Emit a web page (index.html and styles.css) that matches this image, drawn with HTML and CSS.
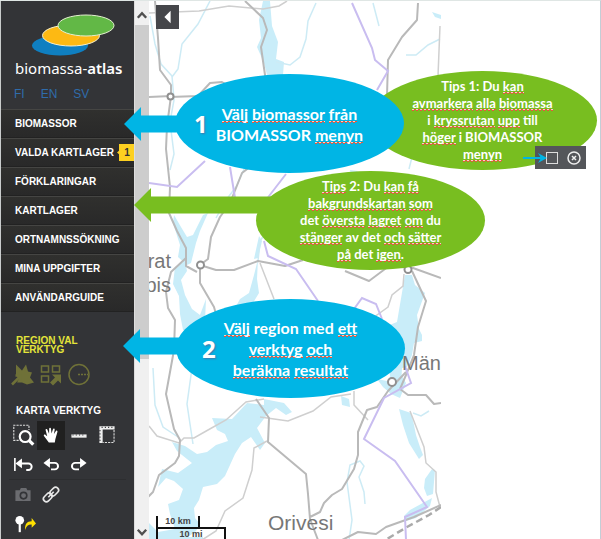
FILE: index.html
```html
<!DOCTYPE html>
<html lang="sv">
<head>
<meta charset="utf-8">
<meta name="viewport" content="width=device-width, initial-scale=1">
<title>biomassa-atlas</title>
<link rel="stylesheet" href="styles.css">
</head>
<body>
<div class="app">
  <aside class="sidebar">
    <header class="brand">
      <svg class="brand-logo" viewBox="0 0 84 44" aria-hidden="true">
        <ellipse cx="29" cy="31.500" rx="28" ry="10" fill="#0f7fc1"/>
        <ellipse cx="40" cy="21.500" rx="28.500" ry="10.500" fill="#fdb913" stroke="#f4f0d0"/>
        <ellipse cx="55" cy="11.500" rx="28" ry="10.500" fill="#62b846" stroke="#e4f0d0"/>
      </svg>
      <div class="brand-name">biomassa-<b>atlas</b></div>
    </header>
    <nav class="languages" aria-label="Språk">
      <a href="#fi">FI</a><a href="#en">EN</a><a href="#sv">SV</a>
    </nav>
    <nav class="menu" aria-label="Meny">
      <a href="#biomassor">BIOMASSOR</a>
      <a href="#valda">VALDA KARTLAGER <span class="badge">1</span></a>
      <a href="#forklaringar">FÖRKLARINGAR</a>
      <a href="#kartlager">KARTLAGER</a>
      <a href="#ortnamn">ORTNAMNSSÖKNING</a>
      <a href="#uppgifter">MINA UPPGIFTER</a>
      <a href="#guide">ANVÄNDARGUIDE</a>
    </nav>
    <section class="tools region-tools">
      <h2>REGION VAL VERKTYG</h2>
      <div class="tool-grid">
        <button type="button" aria-label="Välj område"><svg viewBox="0 0 24 24"><path d="M5 2l6 6 4-6 2 7 4 1-2 5 4 5-7 2-5-2-5 0 2-4-3-3z" fill="#6f7138"/><path d="M1 22l8-8M4.500 13h5v5" fill="none" stroke="#6f7138" stroke-width="2.500"/></svg></button>
        <button type="button" aria-label="Välj rutor"><svg viewBox="0 0 24 24"><path d="M2.500 3.500h7v6h-7zM13.500 3.500h7v6h-7zM2.500 13.500h7v6h-7z" fill="none" stroke="#6f7138" stroke-width="1.500"/><path d="M13 12h9v9l-3-3-5 5-3-3 5-5z" fill="#6f7138"/></svg></button>
        <button type="button" aria-label="Välj cirkel"><svg viewBox="0 0 24 24"><circle cx="12" cy="12" r="10" fill="none" stroke="#6f7138" stroke-width="1.500"/><path d="M11 12h10" stroke="#6f7138" stroke-width="1.500" stroke-dasharray="2 1"/></svg></button>
      </div>
    </section>
    <section class="tools map-tools">
      <h2>KARTA VERKTYG</h2>
      <div class="tool-grid">
        <button type="button" aria-label="Zooma till ruta"><svg viewBox="0 0 24 24"><path d="M11 16.500H3.500V2.500h14V7" fill="none" stroke="#ddd" stroke-dasharray="2 1"/><circle cx="14" cy="13" r="5" fill="none" stroke="#fff" stroke-width="2"/><path d="M17.500 16.500l4 4" stroke="#fff" stroke-width="3"/></svg></button>
        <button type="button" class="active" aria-label="Panorera"><svg viewBox="0 0 24 24"><path d="M10 18.500L5.500 12.500c-.7-1.200.7-1.800 1.500-1l1.500 1.200L7 7c-.2-1.200 1.300-1.500 1.700-.4l1.500 3.700.1-4.500c0-1.200 1.600-1.200 1.700 0l.5 4.400 1.300-4c.4-1.100 1.700-.7 1.600.5l-.7 4 1.700-2.700c.6-1 1.800-.4 1.500.8L16 15.500l-.5 3z" fill="#fff"/></svg></button>
        <button type="button" aria-label="Mät avstånd"><svg viewBox="0 0 24 24"><path d="M5 11h14v3H5z" fill="#eee"/><path d="M6 11.500h12" stroke="#333437" stroke-dasharray="1 2"/></svg></button>
        <button type="button" aria-label="Mät area"><svg viewBox="0 0 24 24"><path d="M5 5h14M6.500 4v15" stroke="#eee" stroke-width="3"/><path d="M7 4.500h12M5.500 7v12" stroke="#333437" stroke-dasharray="1 2"/><path d="M18.500 7v11.500H8" fill="none" stroke="#ddd" stroke-dasharray="2 1"/></svg></button>
        <button type="button" aria-label="Startvy"><svg viewBox="0 0 24 24"><path d="M4.500 6v12" stroke="#fff" stroke-width="1.500"/><path d="M8 11h9a3 3 0 010 6h-2" fill="none" stroke="#fff" stroke-width="1.800"/><path d="M5 11l6-4.500v9z" fill="#fff"/></svg></button>
        <button type="button" aria-label="Föregående"><svg viewBox="0 0 24 24"><path d="M8 10.500h7.500a3 3 0 010 6H12" fill="none" stroke="#fff" stroke-width="1.800"/><path d="M5 10.500L11 6v9z" fill="#fff"/></svg></button>
        <button type="button" aria-label="Nästa"><svg viewBox="0 0 24 24"><path d="M15 10.500H8.500a3 3 0 000 6H12" fill="none" stroke="#fff" stroke-width="1.800"/><path d="M19 10.500L13 6v9z" fill="#fff"/></svg></button>
      </div>
      <div class="tool-grid ruled">
        <button type="button" aria-label="Skärmbild"><svg viewBox="0 0 24 24"><path d="M5 8h4l1-2h5l1 2h3v10H5z" fill="#6b6c70"/><circle cx="12.500" cy="13" r="3" fill="none" stroke="#333437" stroke-width="1.500"/></svg></button>
        <button type="button" aria-label="Länk"><svg viewBox="0 0 24 24" fill="none" stroke="#e8e8e8" stroke-width="1.500"><rect x="10.500" y="6.500" width="9" height="5.500" rx="2.750" transform="rotate(-45 15 9.250)"/><rect x="4.500" y="12" width="9" height="5.500" rx="2.750" transform="rotate(-45 9 14.750)"/><path d="M9.500 14.500l5-5"/></svg></button>
      </div>
      <div class="tool-grid">
        <button type="button" aria-label="Dela plats"><svg viewBox="0 0 24 24"><circle cx="9" cy="9" r="4" fill="#fff"/><path d="M9 10v10" stroke="#fff" stroke-width="2"/><path d="M14 18c-.5-5 1.500-8 6-8V7l4 5-4 4v-3c-3-.2-5 1.500-6 5z" fill="#ffe000"/></svg></button>
      </div>
    </section>
  </aside>

  <div class="scrollbar" aria-hidden="true">
    <svg viewBox="0 0 15 26"><path d="M3 18l4.500-5 4.500 5" fill="none" stroke="#505050" stroke-width="2.500"/></svg>
    <div class="thumb"></div>
    <svg viewBox="0 0 15 16"><path d="M3 5l4.500 5L12 5" fill="none" stroke="#505050" stroke-width="2.500"/></svg>
  </div>

  <main class="map">
    <svg class="map-canvas" viewBox="149 0 292 539" preserveAspectRatio="xMinYMin slice" role="img" aria-label="Karta">
      <g fill="#c9edf9">
        <path d="M263 0h7l2 25 6 16-2 17 8 3-1 13h-16l-3-12-7-16 4-9-2-18z"/>
        <path d="M174 214l7 12 6 10 6-2 10-20 5-2-8 18-4 12-5 20-4 2-9-8 2-12-7-22z"/>
        <path d="M175 266l10-6 2 10-6 9 4 15 7 14 8 6 6-16-1 22-6 14-16-5-3-16-1-18-6-12z"/>
        <path d="M258 258l-1 20 2 14-8 13-7 1-9 10-1-7 6-11 9-6 5-18z"/>
        <path d="M262 240l-4 17-4 1 5-23z"/>
        <path d="M405 274h7l3 10 10 8-8 22 2 14 3 6 0 6-8 2-2 12-5 12-5 1-1 16-9 6-3-22-5-20-1-10 4-12 10-4z"/>
        <path d="M377 378l10 2 12-10 7 12-6 15-9-4-8-7z"/>
        <path d="M341 395l8 3 1 8-8-2z"/>
        <path d="M399 408l12 4 3 12 2 10 4 12 3 8-4 4-10-16-6-18z"/>
        <path d="M264 398l20 4 8 9-6 3-10-7-10 8-9 12 8 15-5 7-9-13-9 6-7 11-10 22-8 8-14 3-4 13-5 8 1 10 5 6-4 7-8 6h15v4h-54v-18l9 9 17-3-5-15-2-10 11-4 4-11-9-8-8-3-8 9 4-18 16 4 14-10-15-12-5-9 13 4 12 8 10-2 9-7 12-4-3-7-8-4-5-12 20 1 15-16 17 2z"/>
        <path d="M432 468l-7 10-1 9 3 8 6-2 1-12 1-12z"/>
        <path d="M432 497l-22 12-6 6 2 5 10-3 14-12z"/>
        <path d="M432 11l9 3v4l-6-2z"/>
        <path d="M350 169l8 1-6 9z"/>
      </g>
      <g class="streams">
        <path d="M150 15l5 28 6 20 11 12 2 24-4 22 4 32-4 16"/>
        <path d="M210 0l-12 23-16 20-4 25-6 8"/>
        <path d="M316 2l-8 18-2 18-6 18-10 8-14-3"/>
        <path d="M373 2l6 23M440 38l-12 6-12 10-10 0"/>
        <path d="M245 166l-9 20-10 13-10 18M258 260l2-20 7-10"/>
        <path d="M235 306l-2 18M153 367l2 37 8 22 15 10M192 367l-5 36 6 40"/>
        <path d="M349 539l3-20-5-38 3-17 10-4 4 5-5 11 5 15 1 12"/>
        <path d="M413 412l8 3 8-5M409 168l5-20 2-10"/>
      </g>
      <g class="minor-roads">
        <path d="M149 12l50-2 30-5 34 3 16-3 8-5M440 25l-2 50M440 120l-2 35"/>
        <path d="M260 262l14 36M404 273l-1 12-11 9-4 12-18 13M149 425l8 10 22 7 5-5h10l14-8 18-10 20-18 18-3"/>
        <path d="M260 416l28 4 25-10 18-14 20-3M354 390l0 14 14 15"/>
        <path d="M267 440l-13 7-2 22-9 28-18 13-9 20-14 9M410 410l14 36 2 16 10 9 0 20 4 15"/>
      </g>
      <g class="roads">
        <path d="M155 0l3 37 2 32 11 15v11l-4 30-1 23 4 38-1 26 8 18 9 17v18l11 6M170 96l28-1 12-13 12-1 10 6M149 96l22-1M245 0l18 17 4 12-6 17 5 35M418 2l-1 17-15 17-14 23-1 36M260 158l-18 14-12 30-10 14-9 20-3 22-8 6v18l14 24 6 22"/>
        <path d="M186 257l-15 14-5 20 2 16 7 12-1 30-8 44 8 35 6 11-1 16-4 7-16 12-6 17-5 5M200 264l16 5h18l24-9 27 5 18-6M345 270l24 10 20-15 24 2 28 10M412 270l14 30-8 26-4 28-8 20-6 14"/>
        <path d="M256 398l13 19-1 24 38 32 2 20 2 25 8 21M310 516l10-5 4-9 8-8 10-6 12-20 4-14v-23l9-22 10-3 11-16 18-19"/>
        <path d="M400 388l8 6h18l8 9 7-1M441 504l-27 12-28 10-10 7-18-2-18 9"/>
      </g>
      <path d="M441 506l-12 8-22 12-15 9-10 6" fill="none" stroke="#aaa" stroke-width="2.500" stroke-dasharray="7 4"/>
      <g class="borders">
        <path d="M352 2l20 45 3 12 13 11-11 19M149 182l28 4 28-26M230 166l5 31M286 173l-20 26M264 240l4 15 28 13 22 32M354 308l8-11 14 6 6 15M405 365l6 17-27 15-20 41 31 22 32 46-22 10 1 23"/>
      </g>
      <g fill="#fff" stroke="#909090" stroke-width="2">
        <circle cx="170.500" cy="95.500" r="3"/><circle cx="200.500" cy="264" r="3.500"/><circle cx="408" cy="268.500" r="3.500"/><circle cx="392" cy="381" r="4"/>
      </g>
      <g class="place-names">
        <text x="171" y="267" text-anchor="end">rat</text>
        <text x="171" y="291" text-anchor="end">pis</text>
        <text x="402" y="369">Män</text>
        <text class="town" x="268" y="529">Orivesi</text>
      </g>
    </svg>
    <button type="button" class="collapse" aria-label="Dölj panelen"><svg viewBox="0 0 22 22"><path d="M14 5v12l-6-6z" fill="#fff"/></svg></button>
    <div class="scale"><span class="scale-km">10 km</span><span class="scale-mi">10 mi</span></div>
  </main>

  <div class="callout tip tip-one">
    <p>Tips 1: Du <u>kan</u><br><u>avmarkera</u> <u>alla</u> <u>biomassa</u><br>i <u>kryssrutan</u> <u>upp</u> till<br><u>höger</u> i BIOMASSOR<br><u>menyn</u></p>
  </div>
  <div class="callout step step-one">
    <span class="number">1</span>
    <p><u>Välj</u> <u>biomassor</u> <u>från</u><br>BIOMASSOR <u>menyn</u></p>
  </div>
  <div class="callout tip tip-two">
    <p><u>Tips</u> 2: Du <u>kan</u> <u>få</u><br><u>bakgrundskartan</u> <u>som</u><br>det <u>översta</u> <u>lagret</u> <u>om</u> du<br><u>stänger</u> av det <u>och</u> <u>sätter</u><br><u>på</u> det <u>igen</u>.</p>
  </div>
  <div class="callout step step-two">
    <span class="number">2</span>
    <p><u>Välj</u> region med <u>ett</u><br><u>verktyg</u> <u>och</u><br><u>beräkna</u> <u>resultat</u></p>
  </div>
  <div class="layer-controls">
    <svg class="pointer" viewBox="0 0 25 12" aria-hidden="true"><path d="M0 6h20" stroke="#00b5e5" stroke-width="2"/><path d="M15 1l9 5-9 5 3-5z" fill="#00b5e5"/></svg>
    <input type="checkbox" aria-label="Markera alla">
    <button type="button" aria-label="Stäng"><svg viewBox="0 0 14 14" fill="none" stroke="#eee"><circle cx="7" cy="7" r="6" stroke-width="1.500"/><path d="M5 5l4 4M9 5l-4 4" stroke-width="1.500"/></svg></button>
  </div>
</div>
</body>
</html>
```
FILE: styles.css
```css
* { box-sizing: border-box; }

body {
  margin: 0;
  background: #fff;
  font-family: "Liberation Sans", Arial, sans-serif;
}

.app {
  position: relative;
  display: grid;
  grid-template-columns: 134px 15px 292px 1fr;
  min-height: 100vh;
  border-top: 1px solid #dfe6e4;
  border-right: 1px solid #c3ced6;
}

button {
  padding: 0;
  border: 0;
  background: none;
  cursor: pointer;
}

button svg { display: block; width: 100%; height: 100%; }

/* Sidebar */
.sidebar {
  border-left: 1px solid #c9cccc;
  background: #333437;
  color: #fff;
}

.brand { padding: 13px 8px 0 14px; }

.brand-logo {
  display: block;
  width: 84px;
  height: 44px;
  margin-left: 16px;
}

.brand-name {
  font: 15px/20px "Noto Sans", sans-serif;
  white-space: nowrap;
}

.brand-name b { font-weight: 600; }

.languages {
  display: flex;
  gap: 16px;
  padding: 10px 13px 9px;
  font-size: 12px;
  line-height: 12px;
}

.languages a { color: #2f6cab; text-decoration: none; }

.menu a {
  display: flex;
  align-items: center;
  justify-content: space-between;
  height: 29px;
  padding-left: 14px;
  border-top: 1px solid #454543;
  border-bottom: 1px solid #222;
  background: linear-gradient(#30302e, #292929);
  color: #fff;
  font-size: 10px;
  font-weight: bold;
  text-decoration: none;
  white-space: nowrap;
}

.badge {
  width: 17px;
  padding-left: 3px;
  background: #fdd020;
  clip-path: polygon(0 50%, 2px 40%, 2px 0, 100% 0, 100% 100%, 2px 100%, 2px 60%);
  color: #333;
  line-height: 17px;
  text-align: center;
}

.tools { padding: 0 8px; }

.tools h2 {
  margin: 0;
  padding-left: 7px;
  font-size: 10px;
  line-height: 9px;
}

.region-tools { padding-top: 24px; }
.region-tools h2 { width: 80px; color: #e4e53a; }
.region-tools .tool-grid { margin-top: 6px; }
.map-tools { padding-top: 17px; }
.map-tools h2 + .tool-grid { margin-top: 6px; }

.tool-grid {
  display: grid;
  grid-template-columns: repeat(4, 28px);
  grid-auto-rows: 29px;
}

.tool-grid button { padding: 2px; }
.tool-grid .active { background: #202020; }
.map-tools .tool-grid button { padding: 1px; }
.ruled { border-top: 1px solid #2d2e30; }

.scrollbar {
  display: flex;
  flex-direction: column;
  border-left: 1px solid #ddd;
  background: #f0f0f0;
}

.scrollbar svg { width: 100%; }

.thumb {
  flex: 0 0 62%;
  margin-bottom: auto;
  background: #cdcdcd;
}

/* Map */
.map { position: relative; overflow: hidden; }

.map-canvas { display: block; width: 100%; height: 100%; }

.streams { fill: none; stroke: #cdebf5; stroke-width: 1.5; }
.minor-roads { fill: none; stroke: #cfcfcf; stroke-width: 1.5; }
.roads { fill: none; stroke: #b9b9b9; stroke-width: 2; stroke-linejoin: round; }
.borders { fill: none; stroke: #c9bdf0; stroke-width: 2; }

.place-names {
  fill: #777;
  font-size: 20px;
}

.place-names .town { font-size: 21px; }

.collapse {
  position: absolute;
  top: 4px;
  left: 7px;
  width: 23px;
  height: 24px;
  background: #45464a;
}

.scale {
  position: absolute;
  bottom: 0;
  left: 7px;
  color: #444;
  font-size: 9px;
  font-weight: bold;
  line-height: 11px;
  text-align: center;
}

.scale span {
  display: block;
  border: 2px solid #111;
  border-bottom: 0;
}

.scale .scale-km { width: 44px; border-top: 0; }
.scale .scale-mi { width: 70px; }

/* Callouts over the map */
.callout {
  position: absolute;
  display: grid;
  place-content: center;
  width: 229px;
  height: 99px;
  border-radius: 50%;
  color: #fff;
  font-family: Lato, sans-serif;
  font-weight: bold;
  text-align: center;
  white-space: nowrap;
}

.callout::before {
  content: "";
  position: absolute;
  right: 93%;
  height: 34px;
  background: inherit;
  clip-path: polygon(0 50%, 17px 0, 17px 25%, 100% 25%, 100% 75%, 17px 75%, 17px 100%);
}

.callout p { margin: 0; }

/* Spell-check squiggle: two one-pixel rows in opposite phase */
.callout u {
  background:
    repeating-linear-gradient(90deg, #e8543c 0 2px, transparent 2px 4px) 0 100% / 100% 1px no-repeat,
    repeating-linear-gradient(90deg, #f3d6c8 0 2px, #e8543c 2px 4px) 0 calc(100% - 1px) / 100% 1px no-repeat;
  text-decoration: none;
}

.tip {
  background: #78be20;
  font-size: 13px;
  line-height: 17px;
}

.step {
  grid-template-columns: 1fr auto 1fr;
  column-gap: 8px;
  align-items: center;
  background: #00b5e5;
  font-size: 16px;
  line-height: 21px;
}

.number {
  justify-self: end;
  font-family: "Open Sans", sans-serif;
  font-size: 24px;
  text-shadow: 1px 1px 2px #47a;
}

.tip-one { top: 70px; left: 368px; }
.tip-one::before { display: none; }
.tip-two { top: 170px; left: 256px; }
.tip-two::before { top: 17px; width: 138px; }
.step-one { top: 73px; left: 175px; }
.step-one::before { top: 33px; width: 67px; }
.step-two { top: 298px; left: 176px; }
.step-two::before { top: 30px; width: 69px; }

.layer-controls {
  position: absolute;
  top: 145px;
  left: 535px;
  display: flex;
  align-items: center;
  gap: 9px;
  height: 23px;
  padding: 0 5px 0 11px;
  background: #54565a;
}

.layer-controls input {
  appearance: none;
  width: 12px;
  height: 12px;
  margin: 0;
  border: 1px solid #ddd;
}

.layer-controls button { width: 14px; height: 14px; }

.pointer {
  position: absolute;
  left: -12px;
  width: 25px;
  height: 12px;
}
```
